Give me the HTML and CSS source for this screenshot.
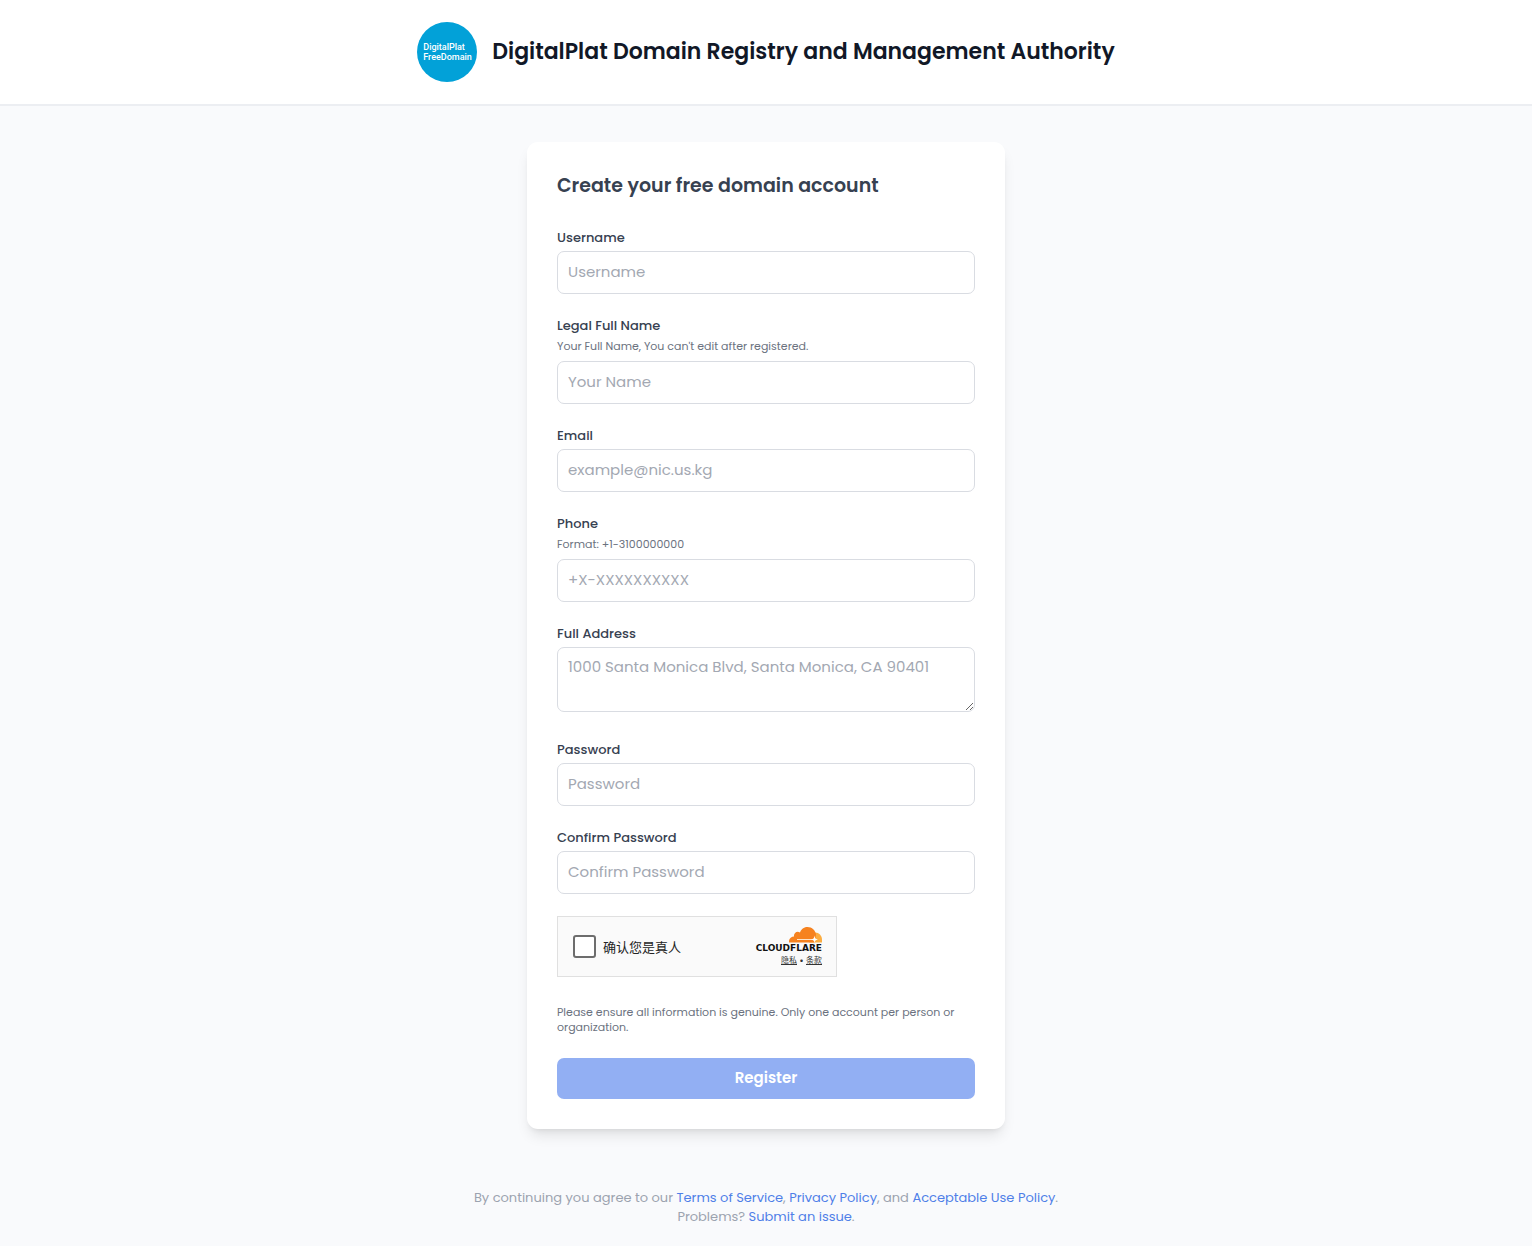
FILE: index.html
```html
<!DOCTYPE html>
<html lang="en">
<head>
	<meta charset="UTF-8">
	<meta name="viewport" content="width=device-width, initial-scale=1.0">
	<title>DigitalPlat Domain Registry and Management Authority</title>
	<link rel="stylesheet" href="styles.css">
</head>
<body>
	<header class="site-header">
		<div class="logo">DigitalPlat<br>FreeDomain</div>
		<h1>DigitalPlat Domain Registry and Management Authority</h1>
	</header>

	<main>
		<form class="card">
			<h2>Create your free domain account</h2>

			<div class="field">
				<label for="username">Username</label>
				<input type="text" id="username" placeholder="Username">
			</div>

			<div class="field">
				<label for="fullname">Legal Full Name</label>
				<p class="hint">Your Full Name, You can't edit after registered.</p>
				<input type="text" id="fullname" placeholder="Your Name">
			</div>

			<div class="field">
				<label for="email">Email</label>
				<input type="email" id="email" placeholder="example@nic.us.kg">
			</div>

			<div class="field">
				<label for="phone">Phone</label>
				<p class="hint">Format: +1-3100000000</p>
				<input type="tel" id="phone" placeholder="+X-XXXXXXXXXX">
			</div>

			<div class="field field-address">
				<label for="address">Full Address</label>
				<textarea id="address" placeholder="1000 Santa Monica Blvd, Santa Monica, CA 90401"></textarea>
			</div>

			<div class="field">
				<label for="password">Password</label>
				<input type="password" id="password" placeholder="Password">
			</div>

			<div class="field">
				<label for="confirm">Confirm Password</label>
				<input type="password" id="confirm" placeholder="Confirm Password">
			</div>

			<div class="turnstile" lang="zh-CN">
				<label class="verify">
					<input type="checkbox">
					<span>确认您是真人</span>
				</label>
				<div class="brand">
					<svg class="cloud" viewBox="0 0 66 32" width="33" height="16" aria-hidden="true">
						<path fill="#fbad41" d="M51 11c8-1 15 6 15 14v6H40l5-10z"/>
						<path fill="#f6821f" d="M0 31c-1-7 4-12 10-12-1-7 6-12 12-8C25 3 31 0 37 0c9 0 16 7 17 15l-3 16z"/>
						<path fill="#fde3c8" d="M16 24h30v2H16z"/>
						<path fill="#fff" d="M51 17c1 6 2 7 7 8-5 1-6 2-7 7-1-5-2-6-7-7 5-1 6-2 7-8z"/>
					</svg>
					<span class="brand-name">CLOUDFLARE</span>
					<span class="brand-links"><a href="#">隐私</a> • <a href="#">条款</a></span>
				</div>
			</div>

			<p class="notice">Please ensure all information is genuine. Only one account per person or organization.</p>

			<button type="submit" disabled>Register</button>
		</form>
	</main>

	<footer>
		<p>By continuing you agree to our <a href="#">Terms of Service</a>, <a href="#">Privacy Policy</a>, and <a href="#">Acceptable Use Policy</a>.</p>
		<p>Problems? <a href="#">Submit an issue</a>.</p>
	</footer>
</body>
</html>
```
FILE: styles.css
```css
* {
	box-sizing: border-box;
}

body {
	margin: 0;
	background-color: #f9fafc;
	font-family: Poppins, Inter, "Noto Sans CJK SC", sans-serif;
	color: #374151;
}

h1, h2, p {
	margin: 0;
}

a {
	color: #4f7fe8;
	text-decoration: none;
}

.site-header {
	display: flex;
	justify-content: center;
	align-items: center;
	gap: 15px;
	padding: 22px 20px;
	background-color: #fff;
	border-bottom: 2px solid #eceef2;
}

.logo {
	display: flex;
	align-items: center;
	flex-shrink: 0;
	width: 60px;
	height: 60px;
	padding-left: 6px;
	border-radius: 50%;
	background-color: #02a1d8;
	color: #fff;
	font-family: Roboto, sans-serif;
	font-size: 9px;
	font-weight: 500;
	line-height: 10px;
}

h1 {
	font-size: 22px;
	font-weight: 600;
	line-height: 34px;
	color: #111827;
}

main {
	padding: 36px 20px 59px;
}

.card {
	width: 100%;
	max-width: 478px;
	margin: 0 auto;
	padding: 30px;
	border-radius: 11px;
	background-color: #fff;
	box-shadow: 0 9px 14px -3px rgba(0, 0, 0, 0.1), 0 4px 6px -4px rgba(0, 0, 0, 0.1);
}

h2 {
	margin-bottom: 29px;
	font-size: 19px;
	font-weight: 600;
	line-height: 27px;
}

.field {
	display: flex;
	flex-direction: column;
	margin-bottom: 22px;
}

.field-address {
	margin-bottom: 28px;
}

.field label {
	margin-bottom: 4px;
	font-size: 13px;
	font-weight: 500;
	line-height: 19px;
}

.hint {
	margin-bottom: 7px;
}

.hint,
.notice {
	font-size: 11px;
	line-height: 15px;
	color: #6b7280;
}

.field input,
.field textarea {
	width: 100%;
	height: 43px;
	padding: 7px 10px 9px;
	border: 1px solid #d9dce2;
	border-radius: 7px;
	background-color: #fff;
	font-family: inherit;
	font-size: 15px;
	line-height: 24px;
	color: #374151;
}

.field textarea {
	height: 65px;
	resize: vertical;
}

::placeholder {
	color: #a3a8b2;
	opacity: 1;
}

.turnstile {
	display: flex;
	justify-content: space-between;
	align-items: center;
	max-width: 280px;
	height: 61px;
	margin-bottom: 28px;
	padding: 0 14px 0 15px;
	border: 1px solid #e0e0e0;
	background-color: #fafafa;
	font-family: "Noto Sans CJK SC", sans-serif;
}

.verify {
	display: flex;
	align-items: center;
	gap: 7px;
	font-size: 13px;
	line-height: 19px;
	color: #232323;
}

.verify input {
	appearance: none;
	width: 23px;
	height: 23px;
	margin: 0;
	border: 2px solid #6d6d6d;
	border-radius: 3px;
	background-color: #fff;
}

.brand {
	display: flex;
	flex-direction: column;
	align-items: flex-end;
}

.brand-name {
	font-family: "DejaVu Sans", sans-serif;
	font-size: 9px;
	font-weight: 700;
	line-height: 10px;
	color: #111;
}

.brand-links {
	margin-top: 1px;
	font-family: Inter, "Noto Sans CJK SC", sans-serif;
	font-size: 8px;
	line-height: 12px;
	color: #333;
}

.brand-links a {
	color: inherit;
	text-decoration: underline;
}

.notice {
	margin-bottom: 23px;
}

button {
	display: block;
	width: 100%;
	padding: 7px 15px 9px;
	border: 0;
	border-radius: 7px;
	background-color: #92aff3;
	color: #fff;
	font-family: inherit;
	font-size: 15px;
	font-weight: 600;
	line-height: 25px;
}

footer {
	padding: 0 20px 20px;
	text-align: center;
	font-size: 13px;
	line-height: 19px;
	color: #9ca3af;
}
```
